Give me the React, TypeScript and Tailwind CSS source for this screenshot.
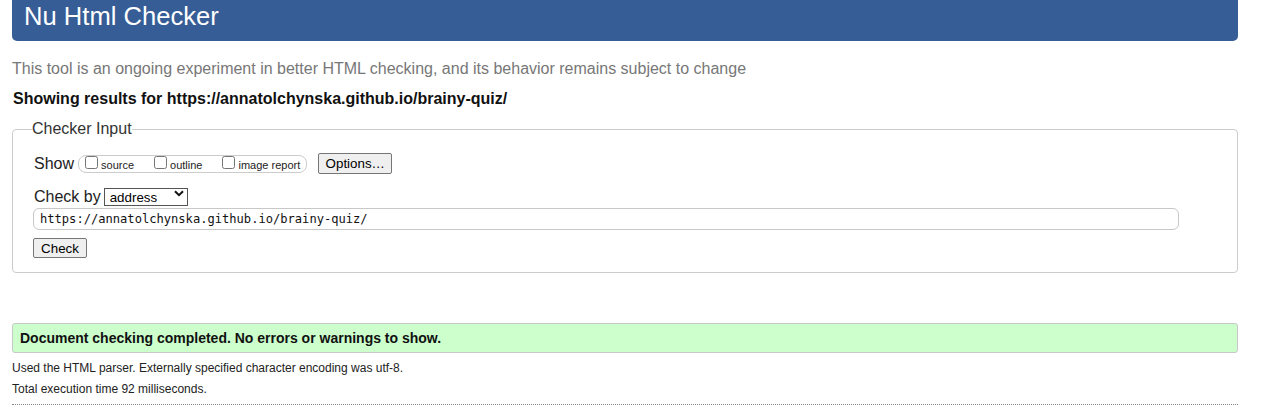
import React from "react";

export default function App() {
  return (
    <div className="min-h-[407px] bg-white text-[#111] font-['Liberation_Sans',Arial,sans-serif]">
      <div className="ml-[12px] w-[1226px]">
        <header className="h-[41px] rounded-b-[5px] bg-[#365d95] pl-[12px] pt-[2px]">
          <h1 className="text-[25.6px] leading-[29px] font-normal text-white">Nu Html Checker</h1>
        </header>

        <p className="mt-[19px] text-[16px] leading-[18px] text-[#777]">
          This tool is an ongoing experiment in better HTML checking, and its behavior remains subject to change
        </p>

        <p className="mt-[12px] ml-[1px] text-[16px] leading-[18px] font-bold text-[#111]">
          Showing results for https://annatolchynska.github.io/brainy-quiz/
        </p>

        <fieldset className="mt-[12px] rounded-[4px] border border-[#ccc] pl-[21px] pr-[20px] pt-[15px] pb-[14px]">
          <legend className="-ml-[2px] px-0 text-[16px] leading-[18px] text-[#333]">Checker Input</legend>

          <div className="flex h-[21px] items-center">
            <span className="text-[16px] leading-[18px] text-[#222]">Show</span>
            <span className="ml-[4px] inline-flex h-[18px] items-end rounded-[8px] border border-[#ccc] pb-[3px] pl-[6px] pr-[6px]">
              <label className="flex items-end">
                <input type="checkbox" className="m-0 h-[13px] w-[13px]" />
                <span className="ml-[3px] -mb-[2px] text-[11px] leading-[11px] text-[#222]">source</span>
              </label>
              <label className="ml-[20px] flex items-end">
                <input type="checkbox" className="m-0 h-[13px] w-[13px]" />
                <span className="ml-[3px] -mb-[2px] text-[11px] leading-[11px] text-[#222]">outline</span>
              </label>
              <label className="ml-[20px] flex items-end">
                <input type="checkbox" className="m-0 h-[13px] w-[13px]" />
                <span className="ml-[3px] -mb-[2px] text-[11px] leading-[11px] text-[#222]">image report</span>
              </label>
            </span>
            <button
              type="button"
              className="ml-[11px] h-[21px] w-[74px] rounded-[2px] border border-[#767676] bg-[#efefef] px-[6px] text-[13.33px] leading-[15px] text-black"
            >
              Options…
            </button>
          </div>

          <div className="mt-[13px] flex h-[19px] items-center">
            <span className="text-[16px] leading-[18px] text-[#222]">Check by</span>
            <span className="relative ml-[3px] inline-block">
              <select
                defaultValue="address"
                className="h-[18px] w-[84px] appearance-none rounded-none border border-[#555] bg-white pl-[5px] text-[13.33px] leading-[15px] text-black"
              >
                <option value="address">address</option>
                <option value="file">file upload</option>
                <option value="text">text input</option>
              </select>
              <svg
                className="pointer-events-none absolute right-[4px] top-[5px]"
                width="10"
                height="7"
                viewBox="0 0 10 7"
              >
                <path d="M1 1.2 L5 5.2 L9 1.2" fill="none" stroke="#111" strokeWidth="2" />
              </svg>
            </span>
          </div>

          <div className="mt-[2px] -ml-[1px] flex h-[22px] w-[1146px] items-center rounded-[6px] border border-[#c8c8c8] pl-[6px] font-['DejaVu_Sans_Mono',monospace] text-[12.1px] text-[#111]">
            https://annatolchynska.github.io/brainy-quiz/
          </div>

          <button
            type="button"
            className="mt-[8px] -ml-[1px] block h-[20px] w-[54px] rounded-[2px] border border-[#767676] bg-[#efefef] px-[7px] text-[13.33px] leading-[15px] text-black"
          >
            Check
          </button>
        </fieldset>

        <div className="mt-[50px] flex h-[30px] items-center rounded-[3px] border border-[#c8c8c8] bg-[#ccffcc] pl-[7px]">
          <span className="text-[14px] font-bold leading-[16px] text-[#111]">
            Document checking completed. No errors or warnings to show.
          </span>
        </div>

        <p className="mt-[8px] text-[12px] leading-[14px] text-[#222]">
          Used the HTML parser. Externally specified character encoding was utf-8.
        </p>
        <p className="mt-[7px] text-[12px] leading-[14px] text-[#222]">Total execution time 92 milliseconds.</p>

        <div className="mt-[8px] border-t border-dotted border-[#888]" />
      </div>
    </div>
  );
}
